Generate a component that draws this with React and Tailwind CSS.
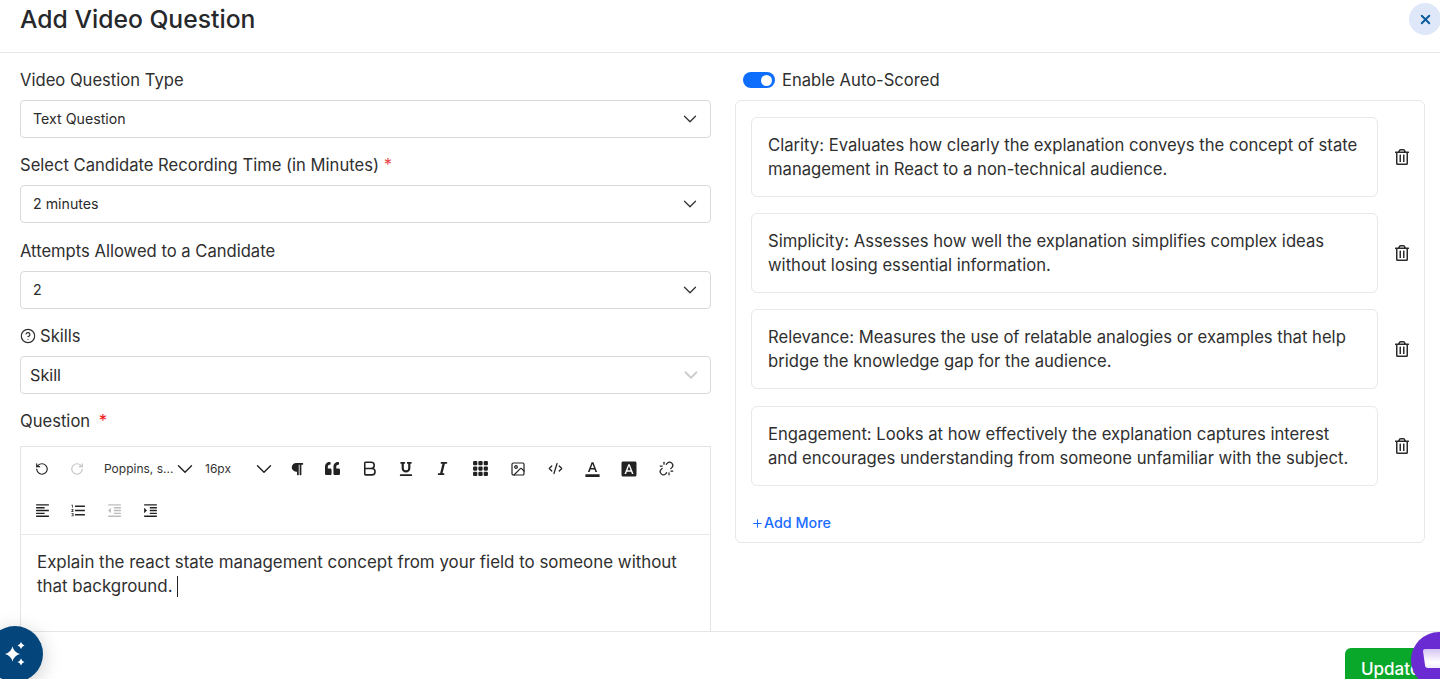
import React from 'react';
import { ChevronDown, RotateCcw, RotateCw, CodeXml, Image as ImageIcon, CircleHelp, Plus, X, Bold, Unlink } from 'lucide-react';
import { FaParagraph, FaQuoteLeft, FaUnderline, FaItalic, FaRegTrashAlt } from 'react-icons/fa';
import { BsGrid3X3GapFill } from 'react-icons/bs';
import { MdFormatAlignLeft, MdFormatListNumbered, MdFormatIndentDecrease, MdFormatIndentIncrease, MdFormatColorText, MdFontDownload } from 'react-icons/md';

const criteria = [
    ['Clarity: Evaluates how clearly the explanation conveys the concept of state', 'management in React to a non-technical audience.'],
    ['Simplicity: Assesses how well the explanation simplifies complex ideas', 'without losing essential information.'],
    ['Relevance: Measures the use of relatable analogies or examples that help', 'bridge the knowledge gap for the audience.'],
    ['Engagement: Looks at how effectively the explanation captures interest', 'and encourages understanding from someone unfamiliar with the subject.'],
];

const SelectBox = ({ value }) => (
    <div className="h-[38px] flex items-center justify-between pl-3 pr-[9px] border border-[#d9d9d9] rounded text-[14.2px] text-[#2b2b2b]">
        <span className="pb-px">{value}</span>
        <ChevronDown size={22} strokeWidth={1.4} className="text-[#333]" />
    </div>
);

const Label = ({ children, className = '' }) => (
    <div className={`h-6 leading-6 text-[16.6px] text-[#2f2f2f] ${className}`}>{children}</div>
);

const App = () => {
    return (
        <div className="relative h-[679px] w-[1440px] overflow-hidden bg-white flex flex-col font-['Inter',sans-serif] text-[#2b2b2b]">
            {/* Header */}
            <div className="h-[53px] shrink-0 border-b border-[#e6e6e6] flex justify-between pl-5">
                <h1 className="text-[24.7px] leading-[38px] font-medium text-[#26282b]">Add Video Question</h1>
                <button className="w-8 h-8 mt-[3px] mr-[-1px] rounded-full bg-[#dfe8f8] flex items-center justify-center">
                    <X size={15} strokeWidth={3} className="text-[#0a5a9c]" />
                </button>
            </div>

            {/* Body */}
            <div className="h-[579px] shrink-0 flex overflow-hidden border-b border-[#e6e6e6]">
                <div className="w-[691px] ml-5 pt-[15px] shrink-0">
                    <Label className="mb-2">Video Question Type</Label>
                    <SelectBox value="Text Question" />
                    <Label className="mt-[15px] mb-2">Select Candidate Recording Time (in Minutes) <span className="text-[#e5484d]">*</span></Label>
                    <SelectBox value="2 minutes" />
                    <Label className="mt-4 mb-2">Attempts Allowed to a Candidate</Label>
                    <SelectBox value="2" />
                    <Label className="mt-[15px] mb-2 flex items-center gap-1">
                        <CircleHelp size={16} strokeWidth={1.75} />
                        Skills
                    </Label>
                    <div className="h-[38px] flex items-center justify-between pl-[9px] pr-2 border border-[#d9d9d9] rounded text-[16.2px]">
                        <span>Skill</span>
                        <ChevronDown size={22} strokeWidth={2} className="text-[#cccccc]" />
                    </div>
                    <Label className="mt-[15px] mb-[13px]">Question <span className="text-[#f01818] ml-1">*</span></Label>

                    {/* Editor */}
                    <div className="border border-[#e4e4e4] border-b-0 h-[200px]">
                        <div className="h-[88px] border-b border-[#e8e8e8]">
                            <div className="h-[43px] flex items-center pl-[14px] text-[#222]">
                                <RotateCcw size={14} className="mr-[21px]" />
                                <RotateCw size={14} className="mr-[20px] text-[#c4c4c4]" />
                                <span className="text-[12px] w-[68px] text-[#333] whitespace-nowrap">Poppins, s...</span>
                                <ChevronDown size={26} strokeWidth={1.3} className="mr-[7px]" />
                                <span className="text-[12px] w-[46px] text-[#333]">16px</span>
                                <ChevronDown size={26} strokeWidth={1.3} className="mr-[13px]" />
                                <FaParagraph size={14} className="mr-[21px]" />
                                <FaQuoteLeft size={15} className="mr-[20px]" />
                                <Bold size={19} strokeWidth={2} className="mr-[20px]" />
                                <FaUnderline size={14} className="mr-[22px]" />
                                <FaItalic size={15} className="mr-[22px]" />
                                <BsGrid3X3GapFill size={17} className="mr-[21px]" />
                                <ImageIcon size={16} strokeWidth={1.8} className="mr-[22px]" />
                                <CodeXml size={15} className="mr-[21px]" />
                                <MdFormatColorText size={17} className="mr-[19px]" />
                                <MdFontDownload size={18} className="mr-[21px]" />
                                <Unlink size={15} strokeWidth={2} />
                            </div>
                            <div className="h-10 flex items-center pl-[13px] text-[#222]">
                                <MdFormatAlignLeft size={17} className="mr-[19px]" />
                                <MdFormatListNumbered size={17} className="mr-[19px]" />
                                <MdFormatIndentDecrease size={17} className="mr-[19px] text-[#bdbdbd]" />
                                <MdFormatIndentIncrease size={17} />
                            </div>
                        </div>
                        <div className="px-4 pt-4 text-[16.9px] leading-[23.5px] text-[#2f2f2f] whitespace-nowrap">
                            Explain the react state management concept from your field to someone without<br />
                            that background. <span className="inline-block w-px h-[21px] bg-[#222] align-middle" />
                        </div>
                    </div>
                </div>

                <div className="w-[690px] ml-6 pt-[15px] shrink-0">
                    <div className="h-[24px] flex items-center ml-2 gap-[7px] mb-2">
                        <div className="w-8 h-4 rounded-full bg-[#0d6efd] flex items-center justify-end pr-[3px]">
                            <div className="w-[11px] h-[11px] rounded-full bg-white" />
                        </div>
                        <span className="text-[16.6px] leading-6 text-[#2f2f2f]">Enable Auto-Scored</span>
                    </div>
                    <div className="h-[443px] border border-[#e8e8e8] rounded-md pl-[15px] pt-4">
                        {criteria.map((lines, i) => (
                            <div key={i} className={`flex items-center ${i === 2 ? 'mb-[17px]' : 'mb-4'} last:mb-0`}>
                                <div className="w-[627px] h-20 border border-[#e8e8e8] rounded-md pl-4 flex flex-col justify-center text-[16.65px] leading-6 text-[#2f2f2f] whitespace-nowrap">
                                    <span>{lines[0]}</span>
                                    <span>{lines[1]}</span>
                                </div>
                                <FaRegTrashAlt size={16} className="ml-4 text-[#2b2b2b]" />
                            </div>
                        ))}
                        <div className="mt-[27px] flex items-center text-[14.3px] leading-5 font-medium text-[#1a6dff]">
                            <Plus size={13} />
                            Add More
                        </div>
                    </div>
                </div>
            </div>

            {/* Footer */}
            <div className="flex-1 flex justify-end pt-4">
                <button className="w-[110px] h-11 mr-[-15px] bg-[#0aa82a] text-white text-left pl-4 rounded-t-md text-[17px] font-medium">Update</button>
            </div>

            {/* Assistant button */}
            <div className="absolute left-[-13px] top-[626px] w-14 h-14 rounded-full bg-[#04467c] shadow-[0_4px_20px_rgba(0,0,0,0.2)] flex items-center justify-center">
                <svg width="24" height="24" viewBox="0 0 24 24" fill="white" className="ml-[3px]">
                    <path d="M7.5 4.5Q9 10.5 15 12Q9 13.5 7.5 19.5Q6 13.5 0 12Q6 10.5 7.5 4.5z" />
                    <path d="M16 0.1Q16.8 2.8 19.5 3.6Q16.8 4.4 16 7.1Q15.2 4.4 12.5 3.6Q15.2 2.8 16 0.1z" />
                    <path d="M16 16.5Q16.8 19.2 19.5 20Q16.8 20.8 16 23.5Q15.2 20.8 12.5 20Q15.2 19.2 16 16.5z" />
                </svg>
            </div>

            {/* Chat button */}
            <div className="absolute left-[1411px] top-[632px] w-14 h-14 rounded-full bg-[#6b2bd3] overflow-hidden">
                <svg width="40" height="40" viewBox="0 0 40 40" className="absolute left-[12px] top-[17px]">
                    <defs>
                        <linearGradient id="bubble" x1="0" y1="0" x2="0" y2="1">
                            <stop offset="0" stopColor="#d4c4f2" />
                            <stop offset="0.55" stopColor="#ffffff" />
                            <stop offset="1" stopColor="#e4daf7" />
                        </linearGradient>
                    </defs>
                    <path d="M0 2a2 2 0 0 1 2-2h24a2 2 0 0 1 2 2v22l-8-5H5a3 3 0 0 1-3-3z" fill="url(#bubble)" />
                </svg>
            </div>
        </div>
    );
};

export default App;
